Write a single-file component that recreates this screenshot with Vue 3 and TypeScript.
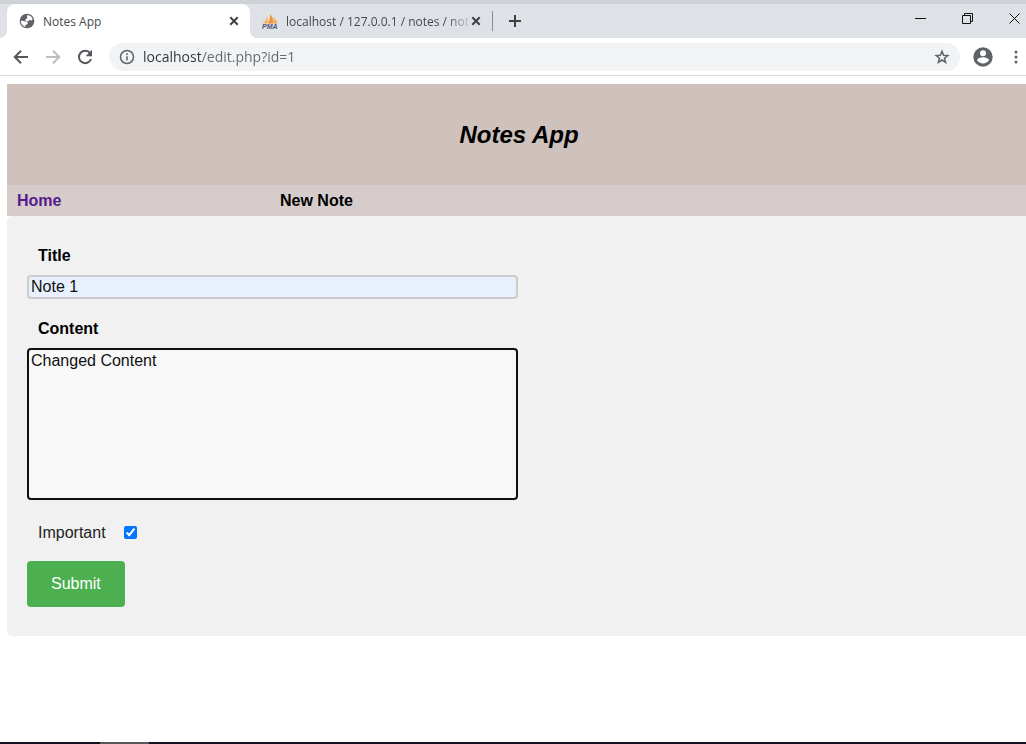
<script setup lang="ts">
import { ref } from 'vue'

const address = ref('localhost/edit.php?id=1')
const title = ref('Note 1')
const content = ref('Changed Content')
const important = ref(true)
</script>

<template>
  <div class="window">
    <header class="tab-strip">
      <div class="tabs">
        <div class="tab active">
          <svg class="favicon" viewBox="0 0 16 16" aria-hidden="true">
            <circle cx="8" cy="8" r="7.3" fill="#5f6368" />
            <path d="M8.300 1.900c2.600.2 4.700 1.900 5.500 4.200l-1.300 1.300-2.200-.3-1.300 1.400-2.300-.4-.4-1.500 1.700-1 .1-1.600zM1.900 7.600l3.600.6 2.500.5.900 1.500-.9 1.300-1.500.3-.2 2.200C3.700 13.300 1.700 10.600 1.900 7.600z" fill="#fff" />
          </svg>
          <span class="tab-title">Notes App</span>
          <button class="tab-close" type="button" aria-label="Close tab">
            <svg viewBox="0 0 10 10"><path d="M1.300 1.300l7.400 7.400M8.700 1.300l-7.400 7.400" /></svg>
          </button>
        </div>
        <div class="tab">
          <svg class="favicon" viewBox="0 0 16 16" aria-hidden="true">
            <path d="M.5 10.500Q4.500 8 5 3.200Q6.500 7 5.200 10.500z" fill="#f8b24f" />
            <path d="M5.700 10.500Q8.800 6 7.800 1Q12 5 11.300 10.500z" fill="#f89230" />
            <path d="M11.800 10.500Q12.400 7 11 4Q14.700 7 15.700 10.500z" fill="#f8a84f" />
            <text x="0" y="15.500" font-size="7" font-weight="700" font-style="italic" font-family="Liberation Sans, sans-serif" fill="#51517f">PMA</text>
          </svg>
          <span class="tab-title faded">localhost / 127.0.0.1 / notes / not</span>
          <button class="tab-close" type="button" aria-label="Close tab">
            <svg viewBox="0 0 10 10"><path d="M1.300 1.300l7.400 7.400M8.700 1.300l-7.400 7.400" /></svg>
          </button>
        </div>
        <button class="new-tab" type="button" aria-label="New tab">
          <svg viewBox="0 0 12 12"><path d="M6 0v12M0 6h12" /></svg>
        </button>
      </div>
      <div class="window-controls">
        <button type="button" aria-label="Minimize">
          <svg viewBox="0 0 11 11"><path d="M0 5.500h11" /></svg>
        </button>
        <button type="button" aria-label="Restore">
          <svg viewBox="0 0 11 11"><path d="M.5 2.500h8v8h-8zM2.500 2.500v-2h8v8h-2" /></svg>
        </button>
        <button type="button" aria-label="Close window">
          <svg viewBox="0 0 11 11"><path d="M.5.5l10 10M10.500.5l-10 10" /></svg>
        </button>
      </div>
    </header>

    <div class="toolbar">
      <button class="tool" type="button" aria-label="Back">
        <svg viewBox="0 0 16 16"><path d="M15 8H2M8 1.800L1.800 8 8 14.200" /></svg>
      </button>
      <button class="tool muted" type="button" aria-label="Forward">
        <svg viewBox="0 0 16 16"><path d="M1 8h13M8 1.800L14.200 8 8 14.200" /></svg>
      </button>
      <button class="tool" type="button" aria-label="Reload">
        <svg viewBox="0 0 16 16">
          <path d="M13.200 4.300A6.200 6.200 0 1 0 14 10" />
          <path d="M15 .8v6.400H8.600z" class="solid" />
        </svg>
      </button>
      <div class="omnibox">
        <svg class="info" viewBox="0 0 16 16" aria-hidden="true">
          <circle cx="8" cy="8" r="6.500" />
          <path d="M8 7.200v4.300M8 4.300v1.600" />
        </svg>
        <input v-model="address" class="address" type="text" aria-label="Address" spellcheck="false" />
        <button class="star" type="button" aria-label="Bookmark this page">
          <svg viewBox="0 0 16 16"><path d="M8 2.200l1.600 4 4.200.3-3.300 2.700 1.100 4.100L8 11l-3.600 2.300 1.100-4.100L2.200 6.500l4.200-.3z" /></svg>
        </button>
      </div>
      <button class="profile" type="button" aria-label="Profile">
        <svg viewBox="0 0 20 20">
          <circle cx="10" cy="10" r="9.700" fill="#5f6368" />
          <circle cx="10" cy="6.200" r="3" fill="#fff" />
          <path d="M4 13.200c.4-2 3.500-3 6-3s5.600 1 6 3c-1.300 2-3.500 3.200-6 3.200s-4.700-1.200-6-3.200z" fill="#fff" />
        </svg>
      </button>
      <button class="menu" type="button" aria-label="Menu">
        <svg viewBox="0 0 4 14">
          <circle cx="2" cy="2" r="1.500" /><circle cx="2" cy="7" r="1.500" /><circle cx="2" cy="12" r="1.500" />
        </svg>
      </button>
    </div>

    <main class="page">
      <div class="banner"><h1>Notes App</h1></div>
      <nav class="nav">
        <a class="visited" href="#home">Home</a>
        <a href="#new">New Note</a>
      </nav>
      <form class="note-form" @submit.prevent>
        <label class="heading" for="title">Title</label>
        <input id="title" v-model="title" class="title-box" type="text" />
        <label class="heading" for="content">Content</label>
        <textarea id="content" v-model="content" class="content-box"></textarea>
        <div class="check-row">
          <label for="important">Important</label>
          <input id="important" v-model="important" type="checkbox" />
        </div>
        <button class="submit" type="submit">Submit</button>
      </form>
    </main>

    <footer class="taskbar"><span class="running"></span></footer>
  </div>
</template>

<style>
body {
  margin: 0;
  background: #fff;
}
</style>

<style scoped>
* {
  box-sizing: border-box;
}

.window {
  display: flex;
  flex-direction: column;
  min-height: 100vh;
  overflow: hidden;
  font-family: "Liberation Sans", Arial, sans-serif;
  font-size: 16px;
  color: #000;
}

button {
  padding: 0;
  border: 0;
  background: none;
  font: inherit;
  color: inherit;
}

svg {
  display: block;
  flex: none;
}

.tab-strip {
  display: flex;
  justify-content: space-between;
  height: 38px;
  border-top: 4px solid #ced1d6;
  background: #dee1e6;
  font-family: "Open Sans", "Noto Sans", sans-serif;
  font-size: 12px;
  color: #45494d;
}

.tabs {
  display: flex;
  padding-left: 7px;
}

.tab {
  position: relative;
  display: flex;
  align-items: center;
  gap: 8px;
  width: 242px;
  padding: 0 10px 0 12px;
}

.tab.active {
  width: 243px;
  border-radius: 8px 8px 0 0;
  background: #fff;
}

.tab.active::before,
.tab.active::after {
  content: "";
  position: absolute;
  bottom: 0;
  width: 8px;
  height: 8px;
}

.tab.active::before {
  right: 100%;
  background: radial-gradient(circle at 0 0, transparent 8px, #fff 8px);
}

.tab.active::after {
  left: 100%;
  background: radial-gradient(circle at 100% 0, transparent 8px, #fff 8px);
}

.favicon {
  width: 16px;
  height: 16px;
}

.tab-title {
  flex: 1;
  margin-right: -6px;
  overflow: hidden;
  white-space: nowrap;
}

.faded {
  mask-image: linear-gradient(to right, #000 88%, rgba(0, 0, 0, 0.2) 100%);
}

.tab-close svg {
  width: 10px;
  height: 10px;
  stroke: #3c4043;
  stroke-width: 2;
}

.tab-close {
  padding: 1px;
}

.new-tab {
  align-self: center;
  height: 20px;
  padding: 0 16px;
  border-left: 1px solid #898c91;
}

.new-tab svg {
  width: 12px;
  height: 12px;
  stroke: #3c4043;
  stroke-width: 2;
}

.window-controls {
  display: flex;
  align-items: center;
  gap: 36px;
  padding: 0 6px 6px 0;
}

.window-controls svg {
  width: 11px;
  height: 11px;
  fill: none;
  stroke: #111;
}

.toolbar {
  display: flex;
  align-items: center;
  height: 38px;
  padding-left: 13px;
  border-bottom: 1px solid #dadce0;
  background: #fff;
}

.tool {
  margin-right: 16px;
}

.tool svg {
  width: 16px;
  height: 16px;
  fill: none;
  stroke: #55595e;
  stroke-width: 2;
}

.tool.muted svg {
  stroke: #bcbec1;
}

.tool .solid {
  fill: #55595e;
  stroke: none;
}

.omnibox {
  display: flex;
  flex: 1;
  align-items: center;
  gap: 8px;
  height: 28px;
  margin-right: 13px;
  padding: 0 10px;
  border-radius: 14px;
  background: #f1f3f4;
}

.info,
.star svg {
  width: 16px;
  height: 16px;
  fill: none;
  stroke: #5f6368;
  stroke-width: 1.5;
}

.address {
  flex: 1;
  min-width: 0;
  padding: 0;
  border: 0;
  outline: 0;
  background: linear-gradient(to right, #303338 58px, #63676b 58px);
  background-clip: text;
  color: transparent;
  font-family: "Open Sans", "Noto Sans", sans-serif;
  font-size: 14px;
}

.profile svg {
  width: 20px;
  height: 20px;
}

.menu {
  padding: 0 8px 0 21px;
}

.menu svg {
  width: 4px;
  height: 14px;
  fill: #5f6368;
}

.page {
  flex: 1;
  padding: 8px 0 8px 7px;
}

.banner {
  display: flex;
  align-items: center;
  justify-content: center;
  height: 101px;
  padding-left: 5px;
  background: #cfc1bb;
}

h1 {
  margin: 0;
  font-size: 24px;
  font-style: italic;
}

.nav {
  display: grid;
  grid-template-columns: 263px 1fr;
  align-items: center;
  height: 31px;
  padding: 0 10px;
  background: #d6cccb;
  font-weight: bold;
}

.nav a {
  color: #000;
  text-decoration: none;
}

.nav .visited {
  color: #551a8b;
}

.note-form {
  display: flex;
  flex-direction: column;
  align-items: flex-start;
  padding: 20px 20px 29px;
  border-radius: 5px 0 0 5px;
  background: #f1f1f1;
}

.heading {
  padding: 10px 11px;
  font-weight: bold;
  line-height: 19px;
}

.title-box,
.content-box {
  width: calc(50% + 1px);
  margin: 0;
  padding: 1px 2px;
  border: 2px solid #ccc;
  border-radius: 4px;
  outline: 0;
  font: inherit;
  color: #111;
}

.title-box {
  height: 24px;
  margin-bottom: 10px;
  background: #e8f0fe;
}

.content-box {
  height: 152px;
  padding-top: 2px;
  border-color: #101010;
  background: #f8f8f8;
  resize: none;
}

.check-row {
  display: flex;
  align-items: center;
  gap: 18px;
  padding: 23px 11px 18px;
  line-height: 20px;
  color: #222;
}

.check-row input {
  width: 13px;
  height: 13px;
  margin: 0 0 2px;
  accent-color: #0075ff;
}

.submit {
  padding: 14px 24px;
  border-radius: 4px;
  background: #4caf50;
  color: #fff;
  line-height: 18px;
}

.taskbar {
  display: flex;
  height: 2px;
  padding-left: 100px;
  background: #10141e;
}

.running {
  width: 49px;
  background: #54585b;
}
</style>
